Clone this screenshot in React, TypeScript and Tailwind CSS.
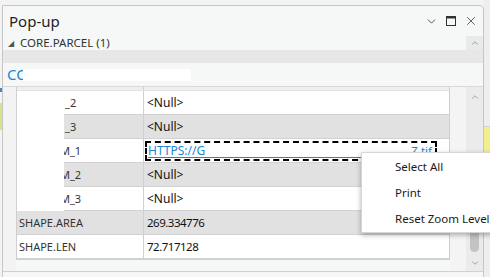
import { X, ChevronDown, ChevronUp } from 'lucide-react';

const rows = [
  { name: '_2', pl: 'pl-[48px]', value: '<Null>', gray: false },
  { name: '_3', pl: 'pl-[48px]', value: '<Null>', gray: true },
  { name: 'M_1', pl: 'pl-[43px]', value: 'link', gray: false },
  { name: 'M_2', pl: 'pl-[43px]', value: '<Null>', gray: true },
  { name: 'M_3', pl: 'pl-[43px]', value: '<Null>', gray: false },
  { name: 'SHAPE.AREA', pl: 'pl-[2px]', value: '269.334776', gray: true },
  { name: 'SHAPE.LEN', pl: 'pl-[2px]', value: '72.717128', gray: false }
];

function MaximizeIcon() {
  return (
    <svg width="10" height="10" viewBox="0 0 10 10">
      <rect x="0.5" y="0.5" width="9" height="9" fill="none" stroke="#333" />
      <rect x="0.5" y="0.5" width="9" height="2" fill="#333" />
    </svg>
  );
}

function ValueCell({ value }: { value: string }) {
  if (value === '<Null>') {
    return <span className="pl-[3px]">{value}</span>;
  }

  if (value !== 'link') {
    // numbers are set tighter in the original
    return <span className="pl-[3px] text-[11.5px] tracking-[-0.5px]">{value}</span>;
  }

  return (
    <div className="mx-[1px] flex h-[20px] w-[292px] items-center border-2 border-dashed border-black bg-white px-[1px]">
      <div className="flex h-[15px] w-full items-start justify-between border-b border-[#1e84d0] text-[#1e84d0] leading-[15px]">
        <span>HTTPS://G</span>
        <span className="pr-[2px] text-[11.5px]">Z.tif</span>
      </div>
    </div>
  );
}

export default function App() {
  return (
    <div className="flex h-[277px] w-[490px] overflow-hidden bg-[#f3f3f3] font-['Noto_Sans',sans-serif] text-[#222]">

      {/* desktop behind, left */}
      <div className="flex w-[2px] flex-col">
        <div className="h-[88px]" />
        <div className="h-[4px] bg-[#4a86c5]" />
        <div className="h-[11px]" />
        <div className="h-[27px] bg-[#d8e28a]" />
      </div>

      <div className="relative mt-[5px] flex h-[280px] w-[482px] flex-col rounded-tr-[4px] border border-[#c6c6c6] bg-[#f6f8f8]">

        {/* title */}
        <div className="flex h-[30px] shrink-0 items-center pl-[6px] pr-[5px]">
          <span className="text-[15px] text-[#1f1f1f]">Pop-up</span>
          <div className="ml-auto flex items-center gap-[8px] text-[#333]">
            <ChevronDown size={13} strokeWidth={1.5} />
            <MaximizeIcon />
            <X size={14} strokeWidth={1.3} />
          </div>
        </div>

        {/* layer */}
        <div className="flex h-[14px] shrink-0 items-center">
          <span className="ml-[5px] text-[8px] leading-none text-[#555]">◢</span>
          <span className="ml-[6px] text-[11.5px] leading-none text-[#333]">CORE.PARCEL (1)</span>
          <div className="ml-auto flex h-[15px] w-[17px] items-center justify-center bg-[#e9eaea] text-[#666]">
            <ChevronUp size={10} strokeWidth={1.5} />
          </div>
        </div>

        <div className="h-[13px] shrink-0 bg-[#e7e7e7]" />

        {/* feature title */}
        <div className="flex h-[23px] shrink-0 items-center pl-[4px]">
          <span className="text-[15px] leading-none text-[#1c86d4]">CO</span>
          <div className="relative -ml-[5px] h-[12px] w-[168px] bg-white" />
        </div>

        {/* body */}
        <div className="flex h-[185px] shrink-0 border-t border-[#d9d9d9]">
          <div className="w-[13px] bg-[#f3f3f3]" />

          <div className="relative flex h-[173px] w-[434px] flex-col border-x border-b border-[#cfcfcf] bg-white text-[12px] leading-none">
            <div className="flex h-[4px] border-b border-[#e3e3e3] bg-[#efefef]">
              <div className="w-[127px] border-r border-[#cfcfcf]" />
            </div>

            {rows.map((r, i) => (
              <div
                key={i}
                className={`flex h-[24px] border-b border-[#d2d2d2] ${r.gray ? 'bg-[#e1e1e1]' : 'bg-white'}`}
              >
                <div className={`flex w-[127px] items-center border-r border-[#cfcfcf] text-[11px] text-[#333] ${r.pl}`}>
                  {r.name}
                </div>
                <div className="flex flex-1 items-center text-[#111]">
                  <ValueCell value={r.value} />
                </div>
              </div>
            ))}

            {/* redacted names */}
            <div className="absolute left-0 top-[4px] h-[120px] w-[47px] bg-white" />
          </div>

          <div className="w-[16px] bg-[#f4f4f4]" />

          {/* scrollbar */}
          <div className="flex w-[17px] flex-col items-center bg-[#ebebeb] text-[#777]">
            <ChevronUp size={10} strokeWidth={1.5} className="mt-[5px]" />
            <div className="mt-[56px] h-[94px] w-[9px] rounded-full bg-[#c3c3c3]" />
            <ChevronDown size={10} strokeWidth={1.5} className="mt-[6px]" />
          </div>
        </div>

        <div className="h-[10px] shrink-0 border-t border-[#d0d0d0]" />
      </div>

      {/* desktop behind, right */}
      <div className="flex w-[6px] flex-col bg-[#eeeeee]">
        <div className="h-[127px] border-b border-[#d4d4d4]" />
        <div className="h-[25px] bg-[#f4ef8c]" />
      </div>

      {/* context menu */}
      <div className="absolute left-[361px] top-[152px] flex h-[81px] w-[140px] flex-col justify-center border border-[#d6d6d6] bg-white pl-[33px] text-[11.5px] text-[#1a1a1a] shadow-[0_2px_5px_rgba(0,0,0,0.3)]">
        <div className="flex h-[26px] items-center">Select All</div>
        <div className="flex h-[26px] items-center">Print</div>
        <div className="flex h-[26px] items-center whitespace-nowrap">Reset Zoom Level</div>
      </div>
    </div>
  );
}
